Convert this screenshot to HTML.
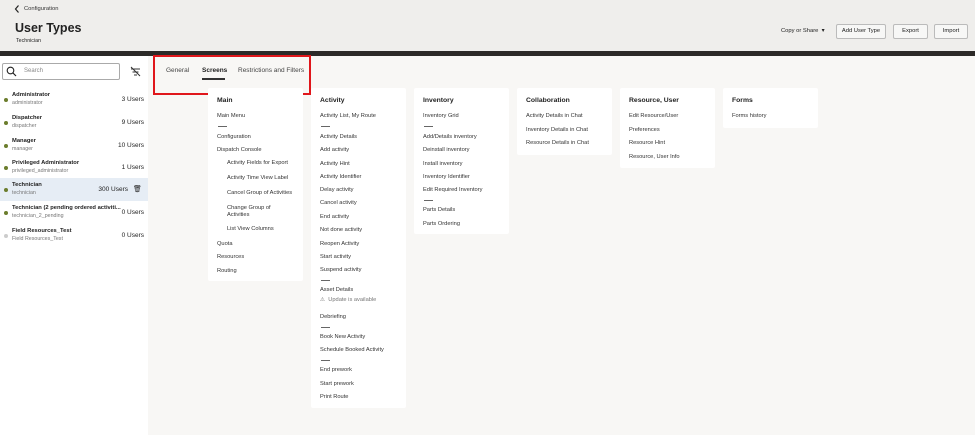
<!DOCTYPE html>
<html><head><meta charset="utf-8"><style>
*{margin:0;padding:0;box-sizing:border-box}
body{width:975px;height:435px;overflow:hidden;background:#f8f7f5;font-family:"Liberation Sans",sans-serif;color:#222;position:relative}
.a{position:absolute;white-space:nowrap}
.hdr{position:absolute;left:0;top:0;width:975px;height:51px;background:#efeeec}
.bar{position:absolute;left:0;top:51px;width:975px;height:5px;background:#2c2a28}
.left{position:absolute;left:0;top:56px;width:148px;height:379px;background:#fff}
.btn{position:absolute;top:24px;height:15px;border:1px solid #bbb;border-radius:2px;background:#f7f7f6;font-size:5.8px;text-align:center;line-height:13px;color:#222}
.card{position:absolute;top:88px;width:95px;background:#fff;border-radius:2px}
.it{position:absolute;font-size:5.7px;color:#333;white-space:nowrap;line-height:7px}
.h{position:absolute;font-size:6.8px;font-weight:bold;color:#222;white-space:nowrap}
.dv{position:absolute;width:9px;height:1px;background:#666}
.row{position:absolute;left:0;width:148px;height:23px}
.dot{position:absolute;left:4px;top:9px;width:4px;height:4px;border-radius:50%;background:#6b7d2c}
.nm{position:absolute;left:12px;top:3px;font-size:5.8px;font-weight:bold;color:#222;white-space:nowrap}
.sb{position:absolute;left:12px;top:11px;font-size:5.3px;color:#777;white-space:nowrap}
.ct{position:absolute;right:4px;top:7px;font-size:6.5px;color:#222}
</style></head><body>
<div class="hdr"></div><div class="bar"></div><div class="left"></div>
<svg class="a" style="left:14px;top:5px" width="6" height="8" viewBox="0 0 6 8"><path d="M4.5 0.5L1.5 4l3 3.5" fill="none" stroke="#222" stroke-width="1.2"/></svg>
<div class="a" style="left:24px;top:6px;font-size:5.8px;color:#333">Configuration</div>
<div class="a" style="left:15px;top:21px;font-size:12.5px;font-weight:bold;color:#222">User Types</div>
<div class="a" style="left:16px;top:38px;font-size:5.3px;color:#222">Technician</div>
<div class="a" style="left:781px;top:28px;font-size:5.8px;color:#222">Copy or Share &nbsp;▾</div>
<div class="btn" style="left:836px;width:50px">Add User Type</div>
<div class="btn" style="left:893px;width:35px">Export</div>
<div class="btn" style="left:934px;width:34px">Import</div>

<div class="a" style="left:2px;top:63px;width:118px;height:17px;border:1px solid #aaa;border-radius:2px;background:#fff"></div>
<svg class="a" style="left:6px;top:66px" width="11" height="11" viewBox="0 0 11 11"><circle cx="4.5" cy="4.5" r="3.3" fill="none" stroke="#222" stroke-width="1.1"/><path d="M7 7l3 3" stroke="#222" stroke-width="1.2"/></svg>
<div class="a" style="left:24px;top:68px;font-size:6px;color:#888">Search</div>
<svg class="a" style="left:130px;top:66px" width="11" height="11" viewBox="0 0 11 11" fill="none" stroke="#333" stroke-width="1"><path d="M1 3h9M2.5 6h6M4 9h3M1 1l9 9"/></svg>

<div class="row" style="top:89px"><div class="dot"></div><div class="nm">Administrator</div><div class="sb">administrator</div><div class="ct">3 Users</div></div>
<div class="row" style="top:112px"><div class="dot"></div><div class="nm">Dispatcher</div><div class="sb">dispatcher</div><div class="ct">9 Users</div></div>
<div class="row" style="top:135px"><div class="dot"></div><div class="nm">Manager</div><div class="sb">manager</div><div class="ct">10 Users</div></div>
<div class="row" style="top:157px"><div class="dot"></div><div class="nm">Privileged Administrator</div><div class="sb">privileged_administrator</div><div class="ct">1 Users</div></div>
<div class="row" style="top:178px;background:#e6edf5"><div class="dot" style="top:10px"></div><div class="nm" style="top:4px">Technician</div><div class="sb" style="top:12px">technician</div><div class="ct" style="right:20px;top:8px">300 Users</div><div class="a" style="left:133px;top:7px;font-size:7px">🗑</div></div>
<div class="row" style="top:202px"><div class="dot"></div><div class="nm">Technician (2 pending ordered activiti...</div><div class="sb">technician_2_pending</div><div class="ct">0 Users</div></div>
<div class="row" style="top:225px"><div class="dot" style="background:#ccc"></div><div class="nm">Field Resources_Test</div><div class="sb">Field Resources_Test</div><div class="ct">0 Users</div></div>

<div class="a" style="left:166px;top:67px;font-size:6.5px;color:#444">General</div>
<div class="a" style="left:202px;top:67px;font-size:6.5px;font-weight:bold;color:#222">Screens</div>
<div class="a" style="left:202px;top:78px;width:23px;height:1.5px;background:#333"></div>
<div class="a" style="left:238px;top:67px;font-size:6.5px;color:#444">Restrictions and Filters</div>
<div class="a" style="left:153px;top:55px;width:158px;height:40px;border:2px solid #e0161b"></div>

<div class="card" style="left:208px;height:193px"></div>
<div class="card" style="left:311px;height:320px"></div>
<div class="card" style="left:414px;height:146px"></div>
<div class="card" style="left:517px;height:67px"></div>
<div class="card" style="left:620px;height:80px"></div>
<div class="card" style="left:723px;height:40px"></div>

<div class="h" style="left:217px;top:97px">Main</div>
<div class="it" style="left:217px;top:113px">Main Menu</div>
<div class="dv" style="left:218px;top:126px"></div>
<div class="it" style="left:217px;top:134px">Configuration</div>
<div class="it" style="left:217px;top:147px">Dispatch Console</div>
<div class="it" style="left:227px;top:160px">Activity Fields for Export</div>
<div class="it" style="left:227px;top:175px">Activity Time View Label</div>
<div class="it" style="left:227px;top:190px">Cancel Group of Activities</div>
<div class="it" style="left:227px;top:205px">Change Group of<br>Activities</div>
<div class="it" style="left:227px;top:226px">List View Columns</div>
<div class="it" style="left:217px;top:241px">Quota</div>
<div class="it" style="left:217px;top:254px">Resources</div>
<div class="it" style="left:217px;top:268px">Routing</div>

<div class="h" style="left:320px;top:97px">Activity</div>
<div class="it" style="left:320px;top:113px">Activity List, My Route</div>
<div class="dv" style="left:321px;top:126px"></div>
<div class="it" style="left:320px;top:134px">Activity Details</div>
<div class="it" style="left:320px;top:147px">Add activity</div>
<div class="it" style="left:320px;top:161px">Activity Hint</div>
<div class="it" style="left:320px;top:174px">Activity Identifier</div>
<div class="it" style="left:320px;top:187px">Delay activity</div>
<div class="it" style="left:320px;top:200px">Cancel activity</div>
<div class="it" style="left:320px;top:214px">End activity</div>
<div class="it" style="left:320px;top:227px">Not done activity</div>
<div class="it" style="left:320px;top:241px">Reopen Activity</div>
<div class="it" style="left:320px;top:254px">Start activity</div>
<div class="it" style="left:320px;top:267px">Suspend activity</div>
<div class="dv" style="left:321px;top:280px"></div>
<div class="it" style="left:320px;top:287px">Asset Details</div>
<div class="it" style="left:320px;top:297px;color:#777">⚠ &nbsp;Update is available</div>
<div class="it" style="left:320px;top:314px">Debriefing</div>
<div class="dv" style="left:321px;top:327px"></div>
<div class="it" style="left:320px;top:334px">Book New Activity</div>
<div class="it" style="left:320px;top:347px">Schedule Booked Activity</div>
<div class="dv" style="left:321px;top:360px"></div>
<div class="it" style="left:320px;top:367px">End prework</div>
<div class="it" style="left:320px;top:381px">Start prework</div>
<div class="it" style="left:320px;top:394px">Print Route</div>

<div class="h" style="left:423px;top:97px">Inventory</div>
<div class="it" style="left:423px;top:113px">Inventory Grid</div>
<div class="dv" style="left:424px;top:126px"></div>
<div class="it" style="left:423px;top:134px">Add/Details inventory</div>
<div class="it" style="left:423px;top:147px">Deinstall inventory</div>
<div class="it" style="left:423px;top:161px">Install inventory</div>
<div class="it" style="left:423px;top:174px">Inventory Identifier</div>
<div class="it" style="left:423px;top:187px">Edit Required Inventory</div>
<div class="dv" style="left:424px;top:200px"></div>
<div class="it" style="left:423px;top:207px">Parts Details</div>
<div class="it" style="left:423px;top:221px">Parts Ordering</div>

<div class="h" style="left:526px;top:97px">Collaboration</div>
<div class="it" style="left:526px;top:113px">Activity Details in Chat</div>
<div class="it" style="left:526px;top:127px">Inventory Details in Chat</div>
<div class="it" style="left:526px;top:140px">Resource Details in Chat</div>

<div class="h" style="left:629px;top:97px">Resource, User</div>
<div class="it" style="left:629px;top:113px">Edit Resource/User</div>
<div class="it" style="left:629px;top:127px">Preferences</div>
<div class="it" style="left:629px;top:140px">Resource Hint</div>
<div class="it" style="left:629px;top:154px">Resource, User Info</div>

<div class="h" style="left:732px;top:97px">Forms</div>
<div class="it" style="left:732px;top:113px">Forms history</div>
</body></html>
